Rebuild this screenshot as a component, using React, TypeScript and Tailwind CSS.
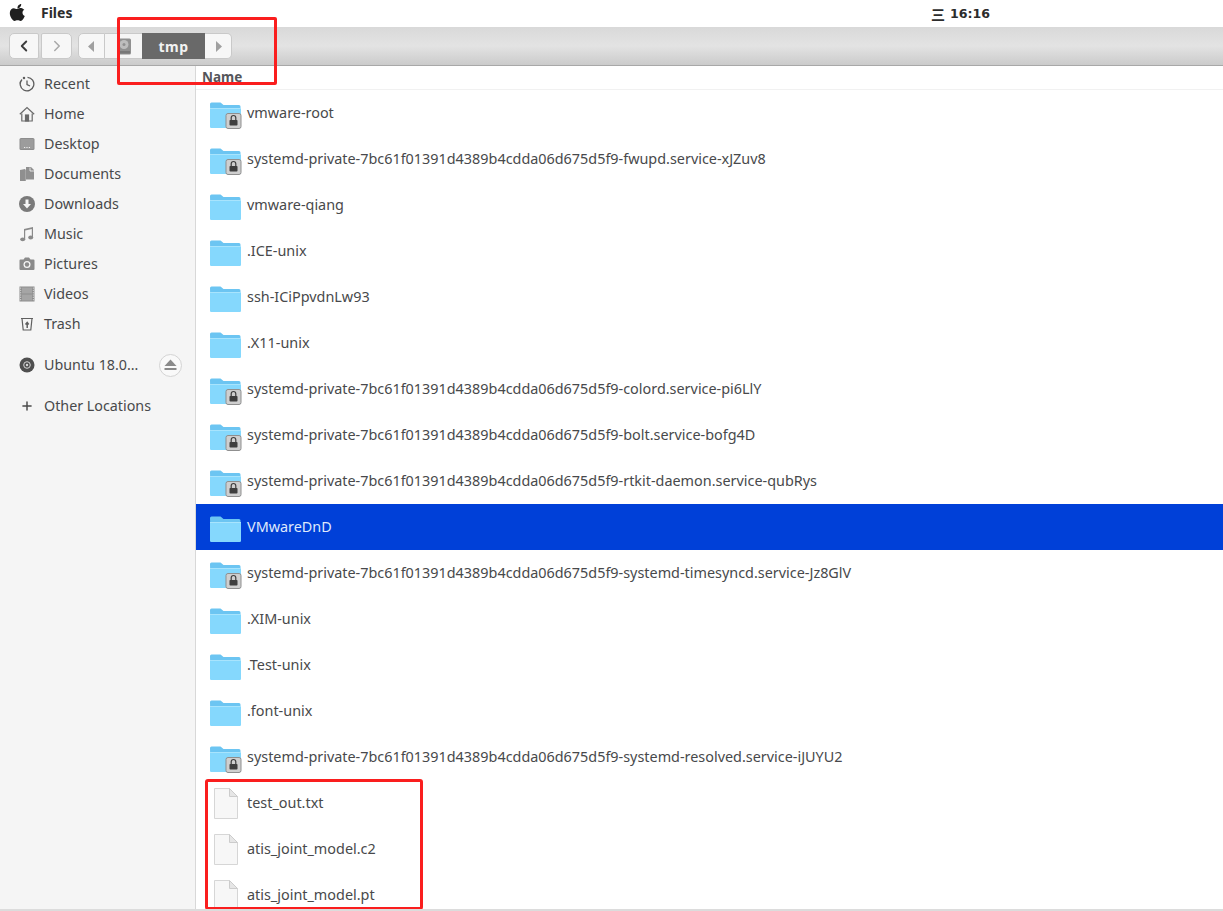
import { ChevronLeft, ChevronRight, Plus } from "lucide-react";
import type { ReactNode } from "react";

const font = { fontFamily: '"Noto Sans", sans-serif' };

const files = [
  { name: "vmware-root", lock: true },
  { name: "systemd-private-7bc61f01391d4389b4cdda06d675d5f9-fwupd.service-xJZuv8", lock: true },
  { name: "vmware-qiang" },
  { name: ".ICE-unix" },
  { name: "ssh-ICiPpvdnLw93" },
  { name: ".X11-unix" },
  { name: "systemd-private-7bc61f01391d4389b4cdda06d675d5f9-colord.service-pi6LlY", lock: true },
  { name: "systemd-private-7bc61f01391d4389b4cdda06d675d5f9-bolt.service-bofg4D", lock: true },
  { name: "systemd-private-7bc61f01391d4389b4cdda06d675d5f9-rtkit-daemon.service-qubRys", lock: true },
  { name: "VMwareDnD", selected: true },
  { name: "systemd-private-7bc61f01391d4389b4cdda06d675d5f9-systemd-timesyncd.service-Jz8GlV", lock: true },
  { name: ".XIM-unix" },
  { name: ".Test-unix" },
  { name: ".font-unix" },
  { name: "systemd-private-7bc61f01391d4389b4cdda06d675d5f9-systemd-resolved.service-iJUYU2", lock: true },
  { name: "test_out.txt", file: true },
  { name: "atis_joint_model.c2", file: true },
  { name: "atis_joint_model.pt", file: true },
];

const Folder = ({ lock }: { lock?: boolean }) => (
  <svg width="36" height="32" viewBox="0 0 36 32" className="shrink-0">
    <path d="M1 5a1.500 1.500 0 0 1 1.500-1.500h9l3 2.500h15.500a1.500 1.500 0 0 1 1.500 1.500v20a1.500 1.500 0 0 1-1.500 1.500h-27a1.500 1.500 0 0 1-1.500-1.500z" fill="#6cc5f2" />
    <path d="M1 9.500h31v18a1.500 1.500 0 0 1-1.500 1.500h-28a1.500 1.500 0 0 1-1.500-1.500z" fill="#85d8fd" />
    <path d="M1 9h31v1H1z" fill="#a8e4fd" />
    {lock && (
      <g>
        <rect x="17" y="14.500" width="15" height="15" rx="2" fill="#cfcfcf" stroke="#8f8f8f" />
        <path d="M22.200 21v-2.200a2.300 2.300 0 0 1 4.600 0V21" fill="none" stroke="#3f3f3f" strokeWidth="1.200" />
        <rect x="20.500" y="21" width="8" height="5.500" rx="0.800" fill="#3f3f3f" />
      </g>
    )}
  </svg>
);

const FileIcon = () => (
  <svg width="24" height="31" viewBox="0 0 24 31" className="shrink-0">
    <path d="M0.500 0.500h15l8 8v22h-23z" fill="#f7f7f7" stroke="#d6d6d6" />
    <path d="M15.500 0.500l8 8h-8z" fill="#e6e6e6" stroke="#cccccc" />
  </svg>
);

const sidebarItems: { name: string; icon: ReactNode }[] = [
  {
    name: "Recent",
    icon: (
      <svg width="16" height="16" viewBox="0 0 16 16" fill="none" stroke="#5e5e5e" strokeWidth="1.300">
        <path d="M3 3.500A6.800 6.800 0 1 0 8.500 1.300" />
        <path d="M1 7.500a7 7 0 0 1 .8-2.500M8 4.500V8.500l3 1.500" />
        <circle cx="5" cy="2" r="0.600" fill="#5e5e5e" />
      </svg>
    ),
  },
  {
    name: "Home",
    icon: (
      <svg width="16" height="16" viewBox="0 0 16 16" fill="none" stroke="#6a6a6a" strokeWidth="1.200">
        <path d="M0.800 8.300L8 1.500l7.200 6.800" />
        <path d="M2.800 7.500v7.500h10.400V7.500" />
        <rect x="6.500" y="9" width="3" height="6" fill="#6a6a6a" />
      </svg>
    ),
  },
  {
    name: "Desktop",
    icon: (
      <svg width="16" height="16" viewBox="0 0 16 16">
        <rect x="0.500" y="2" width="15" height="12" rx="1.500" fill="#8d8d8d" />
        <rect x="1.500" y="3" width="13" height="10" rx="0.500" fill="#9c9c9c" />
        <path d="M5 11.500h1.200M7.400 11.500h1.200M9.800 11.500h1.200" stroke="#eee" />
      </svg>
    ),
  },
  {
    name: "Documents",
    icon: (
      <svg width="16" height="16" viewBox="0 0 16 16" fill="#8f8f8f">
        <path d="M1 4l5-1v12H1z" />
        <path d="M7 1h5l3 3v9.500H7z" />
        <path d="M6 3.500h1V15H6z" fill="#a5a5a5" />
        <path d="M11 1.500v3.500h4" fill="none" stroke="#f5f5f5" strokeWidth="0.800" />
      </svg>
    ),
  },
  {
    name: "Downloads",
    icon: (
      <svg width="16" height="16" viewBox="0 0 16 16">
        <circle cx="8" cy="8" r="8" fill="#7a7a7a" />
        <path d="M6.500 3.500h3v4.500h2.500L8 12.500 4 8h2.500z" fill="#f5f5f5" />
      </svg>
    ),
  },
  {
    name: "Music",
    icon: (
      <svg width="16" height="16" viewBox="0 0 16 16" fill="#8a8a8a">
        <path d="M5 3l9-2v1.800L6.200 4.500V13H5z" />
        <path d="M12.800 2h1.200v9.500h-1.200z" />
        <ellipse cx="3.700" cy="13.300" rx="2.500" ry="1.900" />
        <ellipse cx="11.700" cy="11.500" rx="2.500" ry="1.900" />
      </svg>
    ),
  },
  {
    name: "Pictures",
    icon: (
      <svg width="16" height="16" viewBox="0 0 16 16">
        <path d="M1.500 3.500h3l1.500-2h4l1.500 2h3a1 1 0 0 1 1 1V13a1 1 0 0 1-1 1h-13a1 1 0 0 1-1-1V4.500a1 1 0 0 1 1-1z" fill="#8a8a8a" />
        <circle cx="8" cy="8.500" r="3.500" fill="#f5f5f5" />
        <circle cx="8" cy="8.500" r="2.200" fill="#8a8a8a" />
      </svg>
    ),
  },
  {
    name: "Videos",
    icon: (
      <svg width="16" height="16" viewBox="0 0 16 16">
        <rect x="0.500" y="0.500" width="15" height="15" fill="#8c8c8c" />
        <rect x="3" y="1.500" width="10" height="6" fill="#a5a5a5" />
        <rect x="3" y="8.500" width="10" height="6" fill="#a5a5a5" />
        <path d="M1.700 1.500v13M14.300 1.500v13" stroke="#d8d8d8" strokeWidth="1" strokeDasharray="1.300 1" />
      </svg>
    ),
  },
  {
    name: "Trash",
    icon: (
      <svg width="16" height="16" viewBox="0 0 16 16" fill="none" stroke="#606060" strokeWidth="1.200">
        <path d="M2 2.500h12M3 2.500l1.200 11.500h7.600L13 2.500" />
        <path d="M8.200 12V7M6.500 8.500L8.200 6.500l1.500 2" strokeWidth="1.500" />
      </svg>
    ),
  },
];

const SidebarRow = ({ icon, name }: { icon: ReactNode; name: string }) => (
  <div className="flex h-[30px] items-center gap-[9px] pl-[19px] text-[14.300px] text-[#48494b]">
    <span className="flex w-4 shrink-0 justify-center">{icon}</span>
    <span>{name}</span>
  </div>
);

const Sidebar = () => (
  <aside className="w-[196px] shrink-0 border-r border-[#d8d8d8] bg-[#f5f5f5] pt-[3px]">
    {sidebarItems.map((item) => (
      <SidebarRow key={item.name} icon={item.icon} name={item.name} />
    ))}
    <div className="mt-[11px] flex h-[30px] items-center pl-[19px] text-[14.300px] text-[#48494b]">
      <svg width="16" height="16" viewBox="0 0 16 16" className="shrink-0">
        <circle cx="8" cy="8" r="7.500" fill="#4f4f4f" />
        <circle cx="8" cy="8" r="3.300" fill="none" stroke="#d8d8d8" strokeWidth="1" />
        <circle cx="8" cy="8" r="1.200" fill="#d8d8d8" />
      </svg>
      <span className="ml-[9px] flex-1">Ubuntu 18.0…</span>
      <span className="mr-[13px] flex h-[23px] w-[23px] items-center justify-center rounded-full border border-[#d4d4d4] bg-[#f9f9f9]">
        <svg width="13" height="12" viewBox="0 0 13 12" fill="#8a8a8a">
          <path d="M6.500 0.500l6 6.500H0.500z" />
          <rect x="0.500" y="9" width="12" height="2" />
        </svg>
      </span>
    </div>
    <div className="mt-[11px]">
      <SidebarRow icon={<Plus size={14} color="#4a4a4a" strokeWidth={2.500} />} name="Other Locations" />
    </div>
  </aside>
);

const FileRow = ({ name, lock, selected, file }: { name: string; lock?: boolean; selected?: boolean; file?: boolean }) => (
  <div className={`flex h-[46px] shrink-0 items-center text-[14.400px] ${selected ? "bg-[#0040d8] text-[#dfe8fb]" : "text-[#48494b]"}`}>
    <span className={`flex w-[51px] shrink-0 ${file ? "pl-[18px]" : "pl-[13px] pt-[3px]"}`}>
      {file ? <FileIcon /> : <Folder lock={lock} />}
    </span>
    <span className="pb-[1px]">{name}</span>
  </div>
);

export default function App() {
  return (
    <div className="relative flex h-[911px] w-[1223px] flex-col overflow-hidden bg-white" style={font}>
      <div className="relative flex h-[27px] shrink-0 items-center bg-white pb-[2px]">
        <svg width="18" height="19" viewBox="0 0 18 19" fill="#1f1f1f" className="ml-[9px]">
          <path d="M12.200 1c.1 1.200-.3 2.200-1 3-.7.800-1.700 1.300-2.700 1.200-.1-1.100.4-2.200 1-2.900C10.200 1.600 11.300 1 12.200 1z" />
          <path d="M15.300 6.800c-1.100.7-1.800 1.700-1.800 3 0 1.500.9 2.700 2.300 3.300-.3.900-.8 1.800-1.400 2.700-.8 1.100-1.600 2.200-2.800 2.200-1.200 0-1.600-.7-3-.7s-1.900.7-3 .7c-1.200 0-2-1.100-2.900-2.300C1.500 14 .8 11.900.8 10c0-3.100 2-4.800 4-4.800 1.200 0 2.200.8 3 .8.700 0 1.900-.9 3.300-.9 1.100 0 2.900.4 4.200 1.700z" />
        </svg>
        <span className="mb-[1px] ml-[14px] text-[14px] font-bold text-[#2c2c2c]">Files</span>
        <div className="absolute left-[931px] top-[4px] flex items-center gap-[5px] text-[12.600px] font-bold text-[#2c2c2c]" style={{ fontFamily: '"DejaVu Sans", sans-serif' }}>
          <span className="text-[14px]" style={{ fontFamily: '"Noto Sans CJK SC", sans-serif' }}>三</span>
          <span>16:16</span>
        </div>
      </div>

      <header className="flex h-[39px] shrink-0 items-center border-b border-[#a8a8a8] bg-gradient-to-b from-[#d9d9d9] via-[#e3e3e3] to-[#cbcbcb] pl-[9px]">
        <div className="flex gap-[2px]">
          <button className="flex h-[26px] w-[30px] items-center justify-center rounded-l-[5px] rounded-r-[2px] border border-[#c9c9c9] bg-[#f7f7f7]">
            <ChevronLeft size={18} color="#3c3c3c" strokeWidth={2.500} />
          </button>
          <button className="flex h-[26px] w-[31px] items-center justify-center rounded-l-[2px] rounded-r-[5px] border border-[#c9c9c9] bg-[#f7f7f7]">
            <ChevronRight size={18} color="#a8a8a8" strokeWidth={2} />
          </button>
        </div>
        <div className="ml-[6px] flex h-[26px]">
          <span className="flex w-[27px] items-center justify-center rounded-l-[5px] border border-[#c9c9c9] bg-[#f7f7f7]">
            <svg width="7" height="11" viewBox="0 0 7 11" fill="#a0a0a0"><path d="M6 0v11L0 5.500z" /></svg>
          </span>
          <span className="flex w-[37px] items-center justify-center border-y border-[#c9c9c9] bg-[#f5f5f5]">
            <svg width="16" height="17" viewBox="0 0 16 17">
              <rect x="1" y="0.500" width="14" height="16" rx="1.500" fill="#909090" />
              <circle cx="8" cy="6.500" r="4.500" fill="#bdbdbd" />
              <circle cx="8" cy="6.500" r="1.500" fill="#909090" />
              <rect x="2" y="13" width="12" height="2.500" fill="#787878" />
            </svg>
          </span>
          <span className="flex w-[63px] items-center justify-center bg-[#696969] text-[14px] font-bold tracking-[0.5px] text-[#f2f2f2]">tmp</span>
          <span className="flex w-[27px] items-center justify-center rounded-r-[5px] border border-l-0 border-[#c9c9c9] bg-[#f7f7f7]">
            <svg width="7" height="11" viewBox="0 0 7 11" fill="#a0a0a0"><path d="M1 0v11l6-5.500z" /></svg>
          </span>
        </div>
      </header>

      <div className="flex min-h-0 flex-1">
        <Sidebar />
        <main className="flex min-w-0 flex-1 flex-col overflow-hidden bg-white">
          <div className="flex h-[24px] shrink-0 items-center border-b border-[#f1f1f1] pl-[6px] text-[13.500px] font-bold text-[#55565a]">Name</div>
          {files.map((f) => (
            <FileRow key={f.name} {...f} />
          ))}
        </main>
      </div>

      <div className="absolute left-[117px] top-[17px] h-[68px] w-[160px] rounded-[2px] border-[3px] border-[#fa1e1e]" />
      <div className="absolute left-[205px] top-[779px] h-[131px] w-[218px] rounded-[3px] border-[3px] border-[#fa1e1e]" />
      <div className="absolute bottom-0 left-0 h-[2px] w-full bg-[#dcdcdc]" />
    </div>
  );
}
